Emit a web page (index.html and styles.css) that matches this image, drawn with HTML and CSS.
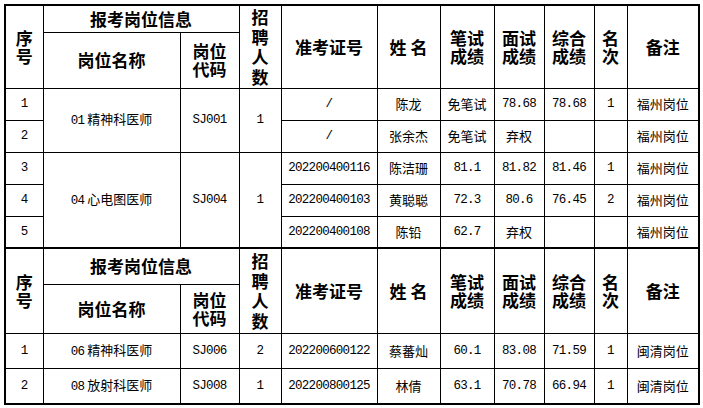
FILE: index.html
```html
<!DOCTYPE html>
<html lang="zh">
<head>
<meta charset="utf-8">
<link rel="stylesheet" href="styles.css">
</head>
<body>
<div class="wrap">
<table class="sheet">
  <colgroup>
    <col class="c1"><col class="c2"><col class="c3"><col class="c4"><col class="c5"><col class="c6">
    <col class="c7"><col class="c8"><col class="c9"><col class="c10"><col class="c11">
  </colgroup>
  <tr class="h1a">
    <th rowspan="2">序<br>号</th>
    <th colspan="2">报考岗位信息</th>
    <th rowspan="2" class="tall">招<br>聘<br>人<br>数</th>
    <th rowspan="2">准考证号</th>
    <th rowspan="2">姓 名</th>
    <th rowspan="2">笔试<br>成绩</th>
    <th rowspan="2">面试<br>成绩</th>
    <th rowspan="2">综合<br>成绩</th>
    <th rowspan="2">名<br>次</th>
    <th rowspan="2">备注</th>
  </tr>
  <tr class="h1b">
    <th>岗位名称</th>
    <th>岗位<br>代码</th>
  </tr>
  <tr class="r">
    <td class="n">1</td>
    <td rowspan="2"><span class="n">01</span> 精神科医师</td>
    <td rowspan="2" class="n">SJ001</td>
    <td rowspan="2" class="n">1</td>
    <td class="n">/</td>
    <td>陈龙</td>
    <td>免笔试</td>
    <td class="n">78.68</td>
    <td class="n">78.68</td>
    <td class="n">1</td>
    <td>福州岗位</td>
  </tr>
  <tr class="r">
    <td class="n">2</td>
    <td class="n">/</td>
    <td>张余杰</td>
    <td>免笔试</td>
    <td>弃权</td>
    <td></td>
    <td></td>
    <td>福州岗位</td>
  </tr>
  <tr class="r">
    <td class="n">3</td>
    <td rowspan="3"><span class="n">04</span> 心电图医师</td>
    <td rowspan="3" class="n">SJ004</td>
    <td rowspan="3" class="n">1</td>
    <td class="n">202200400116</td>
    <td>陈洁珊</td>
    <td class="n">81.1</td>
    <td class="n">81.82</td>
    <td class="n">81.46</td>
    <td class="n">1</td>
    <td>福州岗位</td>
  </tr>
  <tr class="r">
    <td class="n">4</td>
    <td class="n">202200400103</td>
    <td>黄聪聪</td>
    <td class="n">72.3</td>
    <td class="n">80.6</td>
    <td class="n">76.45</td>
    <td class="n">2</td>
    <td>福州岗位</td>
  </tr>
  <tr class="r">
    <td class="n">5</td>
    <td class="n">202200400108</td>
    <td>陈铅</td>
    <td class="n">62.7</td>
    <td>弃权</td>
    <td></td>
    <td></td>
    <td>福州岗位</td>
  </tr>
  <tr class="h2a">
    <th rowspan="2">序<br>号</th>
    <th colspan="2">报考岗位信息</th>
    <th rowspan="2" class="tall">招<br>聘<br>人<br>数</th>
    <th rowspan="2">准考证号</th>
    <th rowspan="2">姓 名</th>
    <th rowspan="2">笔试<br>成绩</th>
    <th rowspan="2">面试<br>成绩</th>
    <th rowspan="2">综合<br>成绩</th>
    <th rowspan="2">名<br>次</th>
    <th rowspan="2">备注</th>
  </tr>
  <tr class="h2b">
    <th>岗位名称</th>
    <th>岗位<br>代码</th>
  </tr>
  <tr class="r2">
    <td class="n">1</td>
    <td><span class="n">06</span> 精神科医师</td>
    <td class="n">SJ006</td>
    <td class="n">2</td>
    <td class="n">202200600122</td>
    <td>蔡蕃灿</td>
    <td class="n">60.1</td>
    <td class="n">83.08</td>
    <td class="n">71.59</td>
    <td class="n">1</td>
    <td>闽清岗位</td>
  </tr>
  <tr class="r3">
    <td class="n">2</td>
    <td><span class="n">08</span> 放射科医师</td>
    <td class="n">SJ008</td>
    <td class="n">1</td>
    <td class="n">202200800125</td>
    <td>林倩</td>
    <td class="n">63.1</td>
    <td class="n">70.78</td>
    <td class="n">66.94</td>
    <td class="n">1</td>
    <td>闽清岗位</td>
  </tr>
</table>
</div>
</body>
</html>
```

FILE: styles.css
```css
html, body {
  margin: 0;
  padding: 0;
  background: #ffffff;
}
.wrap {
  padding: 4px 0 0 4px;
}
.sheet {
  border-collapse: collapse;
  table-layout: fixed;
  width: 695px;
  border: 2px solid #000;
  color: #000;
  font-family: "Noto Sans CJK SC", "Noto Sans", sans-serif;
}
.c1 { width: 38px; }
.c2 { width: 137px; }
.c3 { width: 59px; }
.c4 { width: 42px; }
.c5 { width: 96px; }
.c6 { width: 63px; }
.c7 { width: 54px; }
.c8 { width: 50px; }
.c9 { width: 50px; }
.c10 { width: 33px; }
.c11 { width: 72px; }
th, td {
  border: 1px solid #000;
  padding: 0;
  text-align: center;
  vertical-align: middle;
  overflow: hidden;
  white-space: nowrap;
}
th {
  font-size: 17px;
  font-weight: bold;
  line-height: 18px;
}
th.tall {
  line-height: 20px;
}
td {
  font-size: 13px;
  line-height: 16px;
}
.n {
  font-family: "Liberation Mono", "Noto Sans CJK SC", monospace;
  font-size: 12.5px;
  letter-spacing: -0.7px;
}
.h1a { height: 27px; }
.h1b { height: 56px; }
.r { height: 32px; }
.h2a { height: 36px; }
.h2a th { border-top: 2px solid #000; }
.h2b { height: 49px; }
.r2 { height: 35px; }
.r3 { height: 36px; }
```
